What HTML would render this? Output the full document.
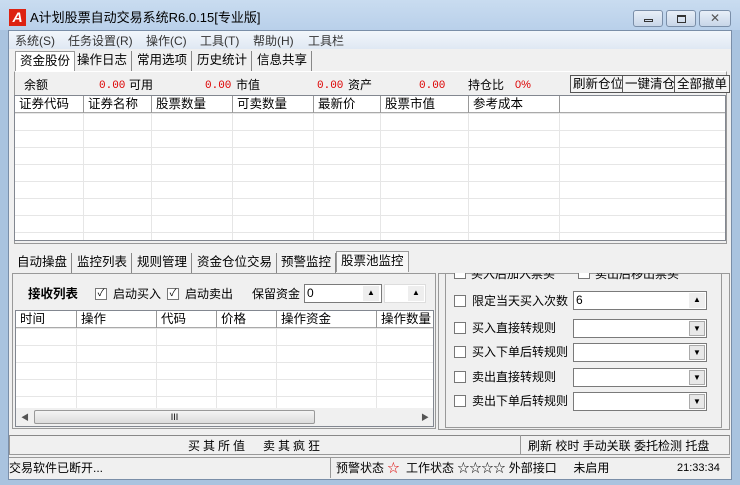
<!DOCTYPE html>
<html><head><meta charset="utf-8"><style>
*{margin:0;padding:0;box-sizing:border-box}
body{width:740px;height:485px;overflow:hidden;background:#a9c3df;font-family:"Liberation Sans","Noto Sans CJK SC","WenQuanYi Zen Hei",sans-serif;font-size:12px;line-height:14px;color:#000;position:relative}
.a{position:absolute;white-space:nowrap}
.title{left:0;top:0;width:740px;height:30px;background:linear-gradient(#c9dcf0,#b9d0ea)}
.client{left:8px;top:30px;width:724px;height:450px;background:#f0f0f0;border:1px solid #7a8ea8}
.menu{left:9px;top:31px;width:722px;height:18px;background:linear-gradient(#f2f6fb,#dfe8f3);color:#333}
.tab{top:0;height:20px;line-height:19px;padding:0 4px;border-right:1px solid #888;font-size:12.5px}
.wbox{background:#fff;border:1px solid #828790}
.hdr{height:17px;line-height:16px;background:#fff;border-bottom:1px solid #aaa;font-size:12.5px}
.hdr span{position:absolute;top:0;height:17px;border-left:1px solid #999;padding-left:4px}
.grid{background-image:linear-gradient(#e6e6e6 1px,transparent 1px);background-size:100% 17px}
.vl{position:absolute;top:0;bottom:0;width:1px;background:#e6e6e6}
.btn{height:18px;line-height:16px;border:1px solid #555;background:#f4f4f4;padding:0 2px;font-size:12.5px}
.cb{width:12px;height:12px;border:1px solid #777;background:#fff}
.inp{background:#fff;border:1px solid #7a7a7a;height:19px}
.dd{position:absolute;right:1px;top:1px;width:16px;height:15px;background:#e8e8e8;border:1px solid #aaa;font-size:8px;text-align:center;line-height:14px}
.red{color:#d00}
.num{font-family:"Liberation Mono",monospace;font-size:11px;color:#d00;top:79px!important}
</style></head><body>
<div class="a title"></div>
<div class="a" style="left:9px;top:9px;width:17px;height:17px;background:#d21;color:#fff;font-weight:bold;font-style:italic;font-size:14px;line-height:17px;text-align:center">A</div>
<div class="a" style="left:30px;top:11px;font-size:13px">A计划股票自动交易系统R6.0.15[专业版]</div>
<div class="a" style="left:633px;top:10px;width:30px;height:17px;border:1px solid #7a8ea8;border-radius:3px;background:linear-gradient(#e8eff8,#c8d6e8)"><div class="a" style="left:10px;top:8px;width:9px;height:3px;border:1px solid #333"></div></div>
<div class="a" style="left:666px;top:10px;width:30px;height:17px;border:1px solid #7a8ea8;border-radius:3px;background:linear-gradient(#e8eff8,#c8d6e8)"><div class="a" style="left:10px;top:4px;width:9px;height:8px;border:1px solid #333;border-top-width:2px"></div></div>
<div class="a" style="left:699px;top:10px;width:32px;height:17px;border:1px solid #7a8ea8;border-radius:3px;background:linear-gradient(#e8eff8,#c8d6e8);text-align:center;line-height:15px;color:#555;font-size:12px">✕</div>
<div class="a client"></div>
<div class="a menu"><span class="a" style="left:6px;top:3px">系统(S)</span><span class="a" style="left:59px;top:3px">任务设置(R)</span><span class="a" style="left:137px;top:3px">操作(C)</span><span class="a" style="left:191px;top:3px">工具(T)</span><span class="a" style="left:244px;top:3px">帮助(H)</span><span class="a" style="left:299px;top:3px">工具栏</span></div>
<div class="a" style="left:9px;top:51px;width:722px;height:21px">
<span class="a tab" style="left:6px;background:#fff;border:1px solid #999;border-bottom:none;height:21px">资金股份</span>
<span class="a tab" style="left:64px">操作日志</span><span class="a tab" style="left:124px">常用选项</span><span class="a tab" style="left:184px">历史统计</span><span class="a tab" style="left:244px">信息共享</span></div>
<div class="a" style="left:14px;top:71px;width:713px;height:173px;border:1px solid #999;border-top-color:#fff"></div>
<span class="a" style="left:24px;top:78px">余额</span><span class="a num" style="left:99px">0.00</span><span class="a" style="left:129px;top:78px">可用</span>
<span class="a num" style="left:205px">0.00</span><span class="a" style="left:236px;top:78px">市值</span>
<span class="a num" style="left:317px">0.00</span><span class="a" style="left:348px;top:78px">资产</span>
<span class="a num" style="left:419px">0.00</span><span class="a" style="left:468px;top:78px">持仓比</span><span class="a red" style="left:515px;top:78px;font-size:11px">0%</span>
<div class="a btn" style="left:570px;top:75px">刷新仓位</div><div class="a btn" style="left:622px;top:75px">一键清仓</div><div class="a btn" style="left:674px;top:75px">全部撤单</div>
<div class="a wbox" style="left:14px;top:95px;width:712px;height:146px">
<div class="a grid" style="left:0;top:17px;width:710px;height:127px"><div class="vl" style="left:68px"></div><div class="vl" style="left:136px"></div><div class="vl" style="left:217px"></div><div class="vl" style="left:298px"></div><div class="vl" style="left:365px"></div><div class="vl" style="left:453px"></div><div class="vl" style="left:544px"></div></div>
<div class="a hdr" style="left:0;top:0;width:710px"><span style="left:0;border:none">证券代码</span><span style="left:68px">证券名称</span><span style="left:136px">股票数量</span><span style="left:217px">可卖数量</span><span style="left:298px">最新价</span><span style="left:365px">股票市值</span><span style="left:453px">参考成本</span><span style="left:544px"></span></div>
</div>
<div class="a" style="left:9px;top:253px;width:722px;height:21px">
<span class="a tab" style="left:4px">自动操盘</span><span class="a tab" style="left:64px">监控列表</span><span class="a tab" style="left:124px">规则管理</span><span class="a tab" style="left:184px">资金仓位交易</span><span class="a tab" style="left:268px">预警监控</span>
<span class="a tab" style="left:327px;background:#f7f7f7;border:1px solid #999;border-bottom:none;height:21px;top:-2px">股票池监控</span></div>
<div class="a" style="left:12px;top:273px;width:424px;height:156px;border:1px solid #999"></div>
<b class="a" style="left:28px;top:287px;font-size:12.5px">接收列表</b>
<div class="a cb" style="left:95px;top:288px;font-size:10px;line-height:10px;text-align:center">✓</div><span class="a" style="left:113px;top:287px">启动买入</span>
<div class="a cb" style="left:167px;top:288px;font-size:10px;line-height:10px;text-align:center">✓</div><span class="a" style="left:185px;top:287px">启动卖出</span>
<span class="a" style="left:252px;top:287px">保留资金</span>
<div class="a inp" style="left:304px;top:284px;width:78px;padding-left:2px;line-height:17px">0<div class="dd" style="right:2px;border:none;background:#eee">▲</div></div>
<div class="a inp" style="left:384px;top:284px;width:42px;border-color:#ddd"><div class="dd" style="border:none;background:#eee">▲</div></div>
<div class="a wbox" style="left:15px;top:310px;width:419px;height:117px">
<div class="a grid" style="left:0;top:17px;width:417px;height:80px"><div class="vl" style="left:60px"></div><div class="vl" style="left:140px"></div><div class="vl" style="left:200px"></div><div class="vl" style="left:260px"></div><div class="vl" style="left:360px"></div></div>
<div class="a hdr" style="left:0;top:0;width:417px"><span style="left:0;border:none">时间</span><span style="left:60px">操作</span><span style="left:140px">代码</span><span style="left:200px">价格</span><span style="left:260px">操作资金</span><span style="left:360px">操作数量</span></div>
<div class="a" style="left:0;top:97px;width:417px;height:18px;background:#f0f0f0"><div class="a" style="left:18px;top:2px;width:281px;height:14px;border:1px solid #999;border-radius:2px;background:linear-gradient(#f4f4f4,#dcdcdc);text-align:center;font-size:9px;line-height:12px">III</div><span class="a" style="left:5px;top:3px;font-size:8px;color:#555">◀</span><span class="a" style="left:405px;top:3px;font-size:8px;color:#555">▶</span></div>
</div>
<div class="a" style="left:438px;top:273px;width:292px;height:157px;border:1px solid #999"></div>
<div class="a" style="left:445px;top:273px;width:277px;height:155px;border:1px solid #999;border-top:none"></div>
<div class="a" style="left:446px;top:273px;width:275px;height:12px;overflow:hidden"><div class="a cb" style="left:8px;top:-6px"></div><span class="a" style="left:25px;top:-6px">买入后加入票买</span><div class="a cb" style="left:132px;top:-6px"></div><span class="a" style="left:149px;top:-6px">卖出后移出票买</span></div>
<div class="a cb" style="left:454px;top:295px"></div><span class="a" style="left:472px;top:294px">限定当天买入次数</span>
<div class="a inp" style="left:573px;top:291px;width:134px;padding-left:2px;line-height:17px">6<div class="dd" style="border:none;background:#eee">▲</div></div>
<div class="a cb" style="left:454px;top:322px"></div><span class="a" style="left:472px;top:321px">买入直接转规则</span><div class="a inp" style="left:573px;top:319px;width:134px"><div class="dd">▼</div></div>
<div class="a cb" style="left:454px;top:346px"></div><span class="a" style="left:472px;top:345px">买入下单后转规则</span><div class="a inp" style="left:573px;top:343px;width:134px"><div class="dd">▼</div></div>
<div class="a cb" style="left:454px;top:371px"></div><span class="a" style="left:472px;top:370px">卖出直接转规则</span><div class="a inp" style="left:573px;top:368px;width:134px"><div class="dd">▼</div></div>
<div class="a cb" style="left:454px;top:395px"></div><span class="a" style="left:472px;top:394px">卖出下单后转规则</span><div class="a inp" style="left:573px;top:392px;width:134px"><div class="dd">▼</div></div>
<div class="a" style="left:9px;top:435px;width:721px;height:20px;border:1px solid #999;border-top-color:#888"></div>
<div class="a" style="left:520px;top:435px;width:1px;height:20px;background:#999"></div>
<span class="a" style="left:188px;top:439px;letter-spacing:3px">买其所值　卖其疯狂</span>
<span class="a" style="left:528px;top:439px">刷新 校时 手动关联 委托检测 托盘</span>
<div class="a" style="left:9px;top:457px;width:721px;height:21px;border-top:1px solid #999"></div>
<div class="a" style="left:330px;top:457px;width:1px;height:21px;background:#999"></div>
<span class="a" style="left:9px;top:461px">交易软件已断开...</span>
<span class="a" style="left:336px;top:461px">预警状态 <span class="red">☆</span>&nbsp; 工作状态 ☆☆☆☆ 外部接口 &nbsp;&nbsp;&nbsp; 未启用</span>
<span class="a" style="left:677px;top:461px;font-size:11px">21:33:34</span>
</body></html>
